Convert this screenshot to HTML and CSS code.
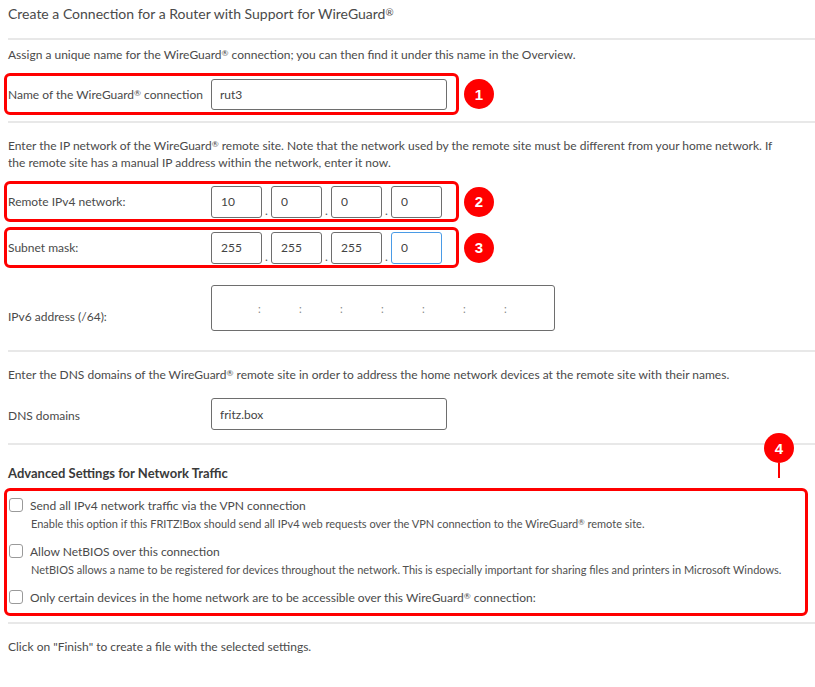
FILE: index.html
```html
<!DOCTYPE html>
<html lang="en">
<head>
<meta charset="utf-8">
<title>WireGuard connection</title>
<link rel="stylesheet" href="styles.css">
</head>
<body>
<div class="page">
  <h1 class="title">Create a Connection for a Router with Support for WireGuard<span class="reg">®</span></h1>
  <div class="sep sep-title"></div>

  <p class="text t1">Assign a unique name for the WireGuard<span class="reg">®</span> connection; you can then find it under this name in the Overview.</p>
  <div class="mark-row r1">
    <div class="mark">
      <div class="field">
        <span class="label">Name of the WireGuard<span class="reg">®</span> connection</span>
        <input class="input wide" type="text" value="rut3">
      </div>
    </div>
    <span class="badge">1</span>
  </div>
  <div class="sep s2"></div>

  <p class="text t2"><span class="line">Enter the IP network of the WireGuard<span class="reg">®</span> remote site. Note that the network used by the remote site must be different from your home network. If</span><span class="line">the remote site has a manual IP address within the network, enter it now.</span></p>
  <div class="mark-row r2">
    <div class="mark">
      <div class="field">
        <span class="label">Remote IPv4 network:</span>
        <div class="ip">
          <input class="input oct" type="text" value="10"><span class="dot">.</span>
          <input class="input oct" type="text" value="0"><span class="dot">.</span>
          <input class="input oct" type="text" value="0"><span class="dot">.</span>
          <input class="input oct" type="text" value="0">
        </div>
      </div>
    </div>
    <span class="badge">2</span>
  </div>
  <div class="mark-row r3">
    <div class="mark">
      <div class="field">
        <span class="label">Subnet mask:</span>
        <div class="ip">
          <input class="input oct" type="text" value="255"><span class="dot">.</span>
          <input class="input oct" type="text" value="255"><span class="dot">.</span>
          <input class="input oct" type="text" value="255"><span class="dot">.</span>
          <input class="input oct focus" type="text" value="0">
        </div>
      </div>
    </div>
    <span class="badge">3</span>
  </div>

  <div class="field v6">
    <span class="label">IPv6 address (/64):</span>
    <div class="input ipv6">
      <span class="colon">:</span><span class="colon">:</span><span class="colon">:</span><span class="colon">:</span><span class="colon">:</span><span class="colon">:</span><span class="colon">:</span>
    </div>
  </div>
  <div class="sep s3"></div>

  <p class="text t3">Enter the DNS domains of the WireGuard<span class="reg">®</span> remote site in order to address the home network devices at the remote site with their names.</p>
  <div class="field dns">
    <span class="label">DNS domains</span>
    <input class="input wide" type="text" value="fritz.box">
  </div>
  <div class="sep s4"></div>

  <h2 class="heading">Advanced Settings for Network Traffic</h2>
  <div class="mark big">
    <span class="badge b4">4</span>
    <div class="opt">
      <span class="box"></span>
      <span class="opt-label">Send all IPv4 network traffic via the VPN connection</span>
    </div>
    <p class="hint">Enable this option if this FRITZ!Box should send all IPv4 web requests over the VPN connection to the WireGuard<span class="reg">®</span> remote site.</p>
    <div class="opt">
      <span class="box"></span>
      <span class="opt-label">Allow NetBIOS over this connection</span>
    </div>
    <p class="hint">NetBIOS allows a name to be registered for devices throughout the network. This is especially important for sharing files and printers in Microsoft Windows.</p>
    <div class="opt">
      <span class="box"></span>
      <span class="opt-label">Only certain devices in the home network are to be accessible over this WireGuard<span class="reg">®</span> connection:</span>
    </div>
  </div>
  <div class="sep s5"></div>

  <p class="text t5">Click on "Finish" to create a file with the selected settings.</p>
</div>
</body>
</html>
```

FILE: styles.css
```css
* { box-sizing: border-box; }
html, body { margin: 0; padding: 0; background: #ffffff; }
body {
  font-family: Lato, "Liberation Sans", sans-serif;
  color: #4a4a4a;
  font-size: 12px;
}
.page {
  padding: 0 0 0 8px;
  width: 815px;
}
.reg {
  font-size: 0.7em;
  line-height: 1;
  vertical-align: 3px;
}
.title {
  margin: 0;
  padding-top: 5px;
  font-size: 14px;
  font-weight: 400;
  line-height: 18px;
  color: #4a4a4a;
}
.sep {
  height: 2px;
  background: #e8e8e8;
}
.sep-title { margin-top: 15px; }
.text {
  margin: 0;
  line-height: 17px;
  font-size: 12px;
}
.t1 { margin-top: 6px; }
.line { display: block; white-space: nowrap; }
.mark-row {
  display: flex;
  align-items: center;
  gap: 5px;
  margin-left: -4px;
}
.r1 { margin-top: 10px; }
.mark {
  border: 3px solid #ff0000;
  border-radius: 6px;
  width: 455px;
  padding-left: 1px;
}
.field {
  display: flex;
  align-items: center;
}
.r1 .field { height: 36px; }
.r2 .field, .r3 .field { height: 35px; }
.label {
  width: 203px;
  flex: none;
  font-size: 12px;
  color: #4a4a4a;
}
.input {
  font-family: Lato, "Liberation Sans", sans-serif;
  font-size: 12px;
  color: #444;
  border: 1px solid #6e6e6e;
  border-radius: 3px;
  background: #fff;
  height: 31px;
  padding: 0 8px;
  outline: none;
}
.wide { width: 236px; }
.badge {
  width: 30px;
  height: 30px;
  border-radius: 50%;
  background: #ff0000;
  color: #fff;
  font-family: "Liberation Sans", Arial, sans-serif;
  font-weight: 700;
  font-size: 15px;
  display: flex;
  align-items: center;
  justify-content: center;
  flex: none;
}
.s2 { margin-top: 6px; }
.t2 { margin-top: 14px; }
.r2 { margin-top: 10px; }
.r3 { margin-top: 5px; }
.ip {
  display: flex;
  align-items: flex-end;
}
.oct {
  width: 51px;
  height: 32px;
  padding: 0 0 0 9px;
}
.dot {
  width: 9px;
  text-align: center;
  color: #555;
  line-height: 14px;
}
.focus { border-color: #4a9be6; }
.v6 {
  margin-top: 17px;
  height: 46px;
  align-items: flex-end;
}
.v6 .label { padding-bottom: 7px; }
.ipv6 {
  width: 344px;
  height: 46px;
  display: flex;
  align-items: center;
  padding-left: 46px;
}
.colon {
  width: 41px;
  flex: none;
  color: #888;
  font-size: 11px;
}
.s3 { margin-top: 19px; }
.t3 { margin-top: 14px; }
.dns {
  margin-top: 15px;
  height: 32px;
}
.dns .label { padding-top: 3px; }
.dns .input { height: 32px; }
.s4 { margin-top: 13px; }
.heading {
  margin: 20px 0 0 0;
  font-size: 13px;
  font-weight: 700;
  color: #3a3a3a;
  line-height: 16px;
}
.big {
  position: relative;
  width: 804px;
  margin-left: -4px;
  margin-top: 7px;
  padding: 6px 0 8px 2px;
}
.b4 {
  position: absolute;
  right: 11px;
  top: -58px;
}
.b4::after {
  content: "";
  position: absolute;
  left: 14px;
  top: 30px;
  width: 2px;
  height: 15px;
  background: #ff0000;
}
.opt {
  display: flex;
  align-items: center;
  height: 16px;
}
.box {
  width: 14px;
  height: 14px;
  border: 1px solid #9a9a9a;
  border-radius: 3px;
  flex: none;
  margin-right: 7px;
}
.opt-label {
  font-size: 12px;
  color: #4a4a4a;
}
.hint {
  margin: 0;
  padding: 4px 0 0 22px;
  font-size: 11px;
  line-height: 14px;
  height: 30px;
  color: #505050;
}
.s5 { margin-top: 6px; }
.t5 { margin-top: 14px; }
```
